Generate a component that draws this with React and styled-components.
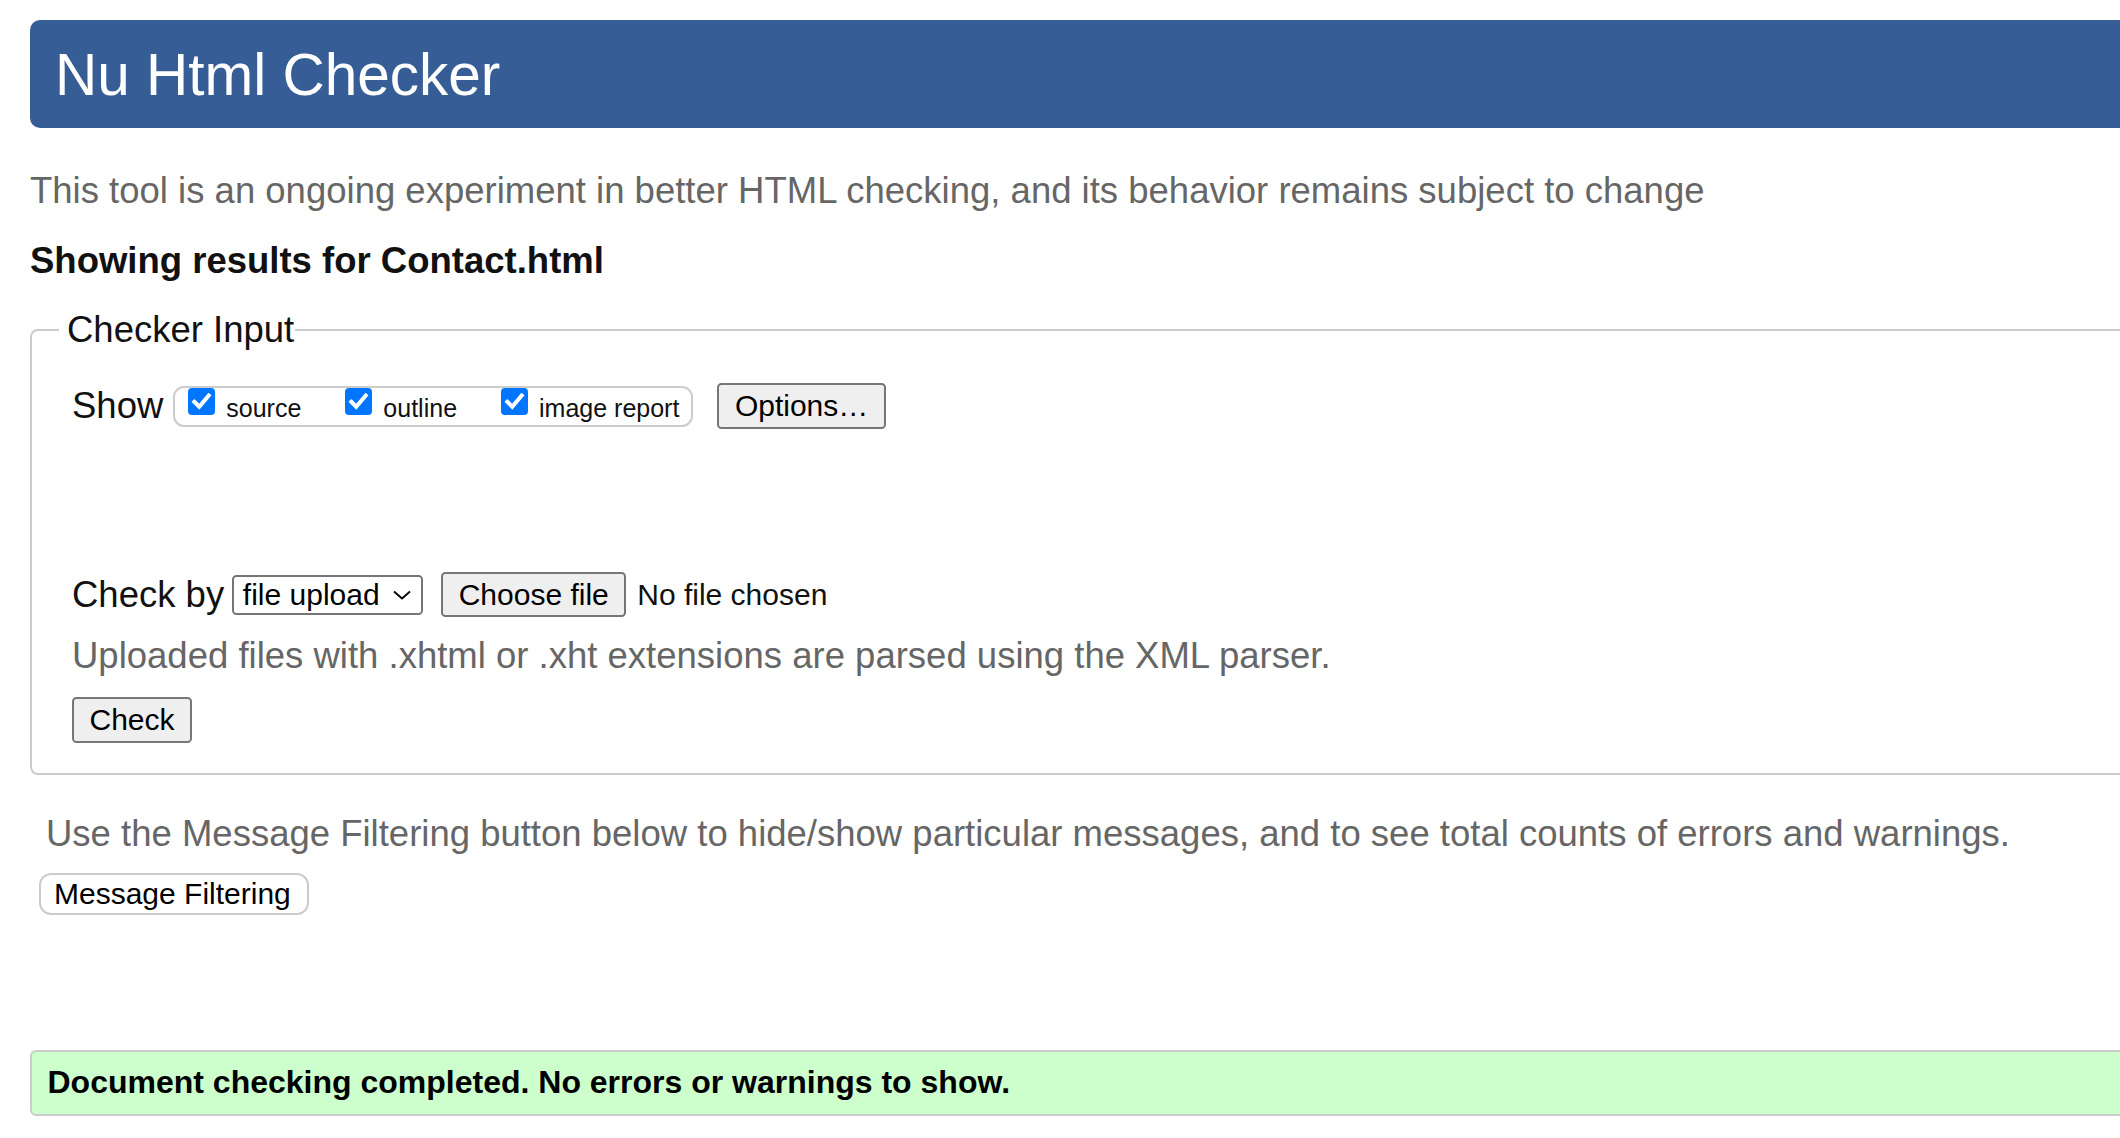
import React from "react";
import styled, { createGlobalStyle } from "styled-components";

const GlobalStyle = createGlobalStyle`
  html, body {
    margin: 0;
    padding: 0;
    overflow: hidden;
    background: #fff;
  }
  body {
    font-family: "Liberation Sans", Arial, sans-serif;
    color: #000;
  }
`;

const Page = styled.div`
  width: 2300px;
  padding: 20px 0 0 30px;
`;

const Banner = styled.h1`
  margin: 0;
  background: #365d95;
  color: #fff;
  font-weight: normal;
  font-size: 58.5px;
  line-height: 65px;
  padding: 21.5px 25px;
  border-radius: 10px;
`;

const Intro = styled.p`
  margin: 42.5px 0 0;
  font-size: 36.5px;
  line-height: 40px;
  color: #666;
`;

const ResultsFor = styled.h2`
  margin: 30px 0 0;
  font-size: 36.5px;
  line-height: 40px;
  font-weight: bold;
  color: #111;
`;

const Fieldset = styled.fieldset`
  margin: 29px 0 0;
  padding: 0 0 30px 40px;
  border: 2px solid #ccc;
  border-radius: 8px;
`;

const Legend = styled.legend`
  margin-left: -13px;
  padding: 0 1px 0 8px;
  font-size: 36.5px;
  line-height: 40px;
  color: #111;
`;

const Row = styled.div`
  display: flex;
  align-items: center;
  margin-top: ${(p) => p.$top}px;
  height: ${(p) => p.$height}px;
`;

const RowLabel = styled.span`
  font-size: 36.5px;
  line-height: 40px;
  margin-right: ${(p) => p.$gap}px;
  color: #111;
`;

const CheckGroup = styled.div`
  display: flex;
  align-items: flex-start;
  height: 37px;
  padding: 0 12px 0 4px;
  border: 2px solid #ccc;
  border-radius: 11px;
  margin-right: 24px;
`;

const CheckBox = styled.span`
  flex: none;
  display: inline-flex;
  align-items: center;
  justify-content: center;
  width: 27px;
  height: 27px;
  margin-left: 9px;
  border-radius: 4px;
  background: #0075ff;
`;

const CheckLabel = styled.span`
  font-size: 25px;
  line-height: 30px;
  margin-top: 5px;
  margin-left: 11px;
  margin-right: ${(p) => (p.$last ? 0 : 35)}px;
  color: #111;
`;

const NativeButton = styled.button`
  box-sizing: border-box;
  height: ${(p) => p.$h}px;
  padding: 0 15.5px;
  font-family: "Liberation Sans", Arial, sans-serif;
  font-size: 30px;
  line-height: 34px;
  color: #000;
  background: #efefef;
  border: 2px solid #767676;
  border-radius: 4.5px;
`;

const SelectBox = styled.div`
  box-sizing: border-box;
  display: flex;
  align-items: center;
  width: 191px;
  height: 40px;
  padding: 0 9px 0 8.7px;
  border: 2px solid #767676;
  border-radius: 4.5px;
  background: #fff;
  font-size: 30px;
  color: #000;
  margin-right: 18px;
`;

const SelectText = styled.span`
  flex: 1;
  line-height: 34px;
`;

const FileStatus = styled.span`
  margin-left: 11px;
  font-size: 30px;
  line-height: 34px;
  color: #111;
`;

const Note = styled.p`
  margin: 18.5px 0 0;
  font-size: 36.5px;
  line-height: 40px;
  color: #666;
`;

const SubmitWrap = styled.div`
  margin-top: 21.5px;
`;

const Hint = styled.p`
  margin: 38.5px 0 0 16px;
  font-size: 36.5px;
  line-height: 40px;
  color: #666;
`;

const FilterButton = styled.button`
  display: block;
  box-sizing: border-box;
  margin: 19.5px 0 0 9px;
  height: 42px;
  padding: 0 16px 0 13px;
  font-family: "Liberation Sans", Arial, sans-serif;
  font-size: 30px;
  line-height: 34px;
  color: #000;
  background: #fff;
  border: 2px solid #ccc;
  border-radius: 12px;
`;

const Success = styled.div`
  margin-top: 135px;
  padding: 12px 0 14px 15.5px;
  background: #ccffcc;
  border: 2px solid #ccc;
  border-radius: 6px;
  font-size: 32px;
  line-height: 36px;
  font-weight: bold;
  color: #000;
`;

function Tick() {
  return (
    <CheckBox>
      <svg width="23" height="23" viewBox="0 0 16 16" aria-hidden="true">
        <path
          d="M3 8.2 L6.4 11.6 L13 3.8"
          fill="none"
          stroke="#fff"
          strokeWidth="2.8"
          strokeLinecap="square"
          strokeLinejoin="miter"
        />
      </svg>
    </CheckBox>
  );
}

function Chevron() {
  return (
    <svg width="20" height="10" viewBox="0 0 20 10" aria-hidden="true">
      <path d="M2 1.5 L10 8.5 L18 1.5" fill="none" stroke="#000" strokeWidth="1.8" />
    </svg>
  );
}

const options = ["source", "outline", "image report"];

export default function App() {
  return (
    <>
      <GlobalStyle />
      <Page>
        <Banner>Nu Html Checker</Banner>
        <Intro>
          This tool is an ongoing experiment in better HTML checking, and its behavior remains
          subject to change
        </Intro>
        <ResultsFor>Showing results for Contact.html</ResultsFor>
        <Fieldset>
          <Legend>Checker Input</Legend>
          <Row $top={33.5} $height={46}>
            <RowLabel $gap={10}>Show</RowLabel>
            <CheckGroup>
              {options.map((o, i) => (
                <React.Fragment key={o}>
                  <Tick />
                  <CheckLabel $last={i === options.length - 1}>{o}</CheckLabel>
                </React.Fragment>
              ))}
            </CheckGroup>
            <NativeButton $h={46}>Options…</NativeButton>
          </Row>
          <Row $top={143} $height={45}>
            <RowLabel $gap={8}>Check by</RowLabel>
            <SelectBox>
              <SelectText>file upload</SelectText>
              <Chevron />
            </SelectBox>
            <NativeButton $h={45}>Choose file</NativeButton>
            <FileStatus>No file chosen</FileStatus>
          </Row>
          <Note>Uploaded files with .xhtml or .xht extensions are parsed using the XML parser.</Note>
          <SubmitWrap>
            <NativeButton $h={46}>Check</NativeButton>
          </SubmitWrap>
        </Fieldset>
        <Hint>
          Use the Message Filtering button below to hide/show particular messages, and to see total
          counts of errors and warnings.
        </Hint>
        <FilterButton>Message Filtering</FilterButton>
        <Success>Document checking completed. No errors or warnings to show.</Success>
      </Page>
    </>
  );
}
